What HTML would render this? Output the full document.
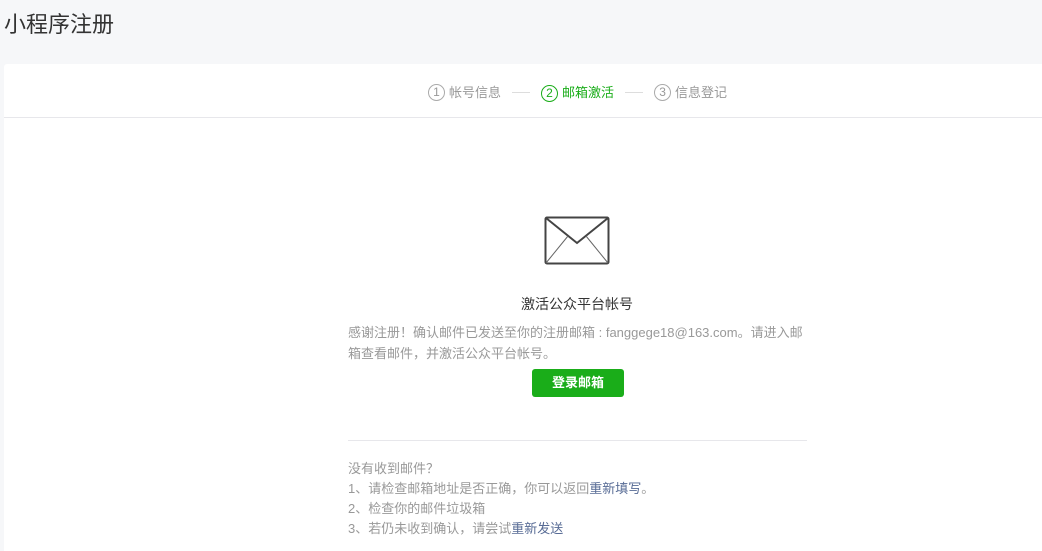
<!DOCTYPE html>
<html><head><meta charset="utf-8"><style>
*{margin:0;padding:0;box-sizing:border-box}
body{width:1042px;height:551px;overflow:hidden;background:#f6f7f9;font-family:"Liberation Sans","Noto Sans CJK SC",sans-serif;position:relative}
.t{position:absolute;left:4px;top:8px;font-size:22px;color:#333;line-height:34px}
.card{position:absolute;left:4px;top:64px;width:1038px;height:487px;background:#fff;border-radius:3px 0 0 0}
.hd{height:54px;border-bottom:1px solid #e7e7eb;position:relative}
.steps{position:absolute;top:18px;left:424px;font-size:13px;color:#999;line-height:20px;white-space:nowrap}
.steps span{display:inline-block;vertical-align:middle}
.c{display:inline-block;width:17px;height:17px;border:1px solid #aaa;border-radius:50%;text-align:center;font-size:12px;line-height:15px;margin-right:4px}
.ln{width:18px;height:1px;background:#ddd;margin:0 11px}
.g{color:#1aad19}.g .c{border-color:#1aad19}
.abs{position:absolute}
.p{left:344px;width:460px;font-size:13px;color:#999;line-height:21px}
</style></head><body>
<div class="t">小程序注册</div>
<div class="card">
<div class="hd"><div class="steps"><span class="c">1</span><span>帐号信息</span><span class="ln"></span><span class="g"><span class="c">2</span>邮箱激活</span><span class="ln"></span><span class="c">3</span><span>信息登记</span></div></div>
<svg class="abs" style="left:540px;top:152px" width="66" height="49" viewBox="0 0 66 49"><rect x="1.5" y="1.5" width="63" height="46" rx="1.5" fill="none" stroke="#444" stroke-width="2"/><path d="M2 2L33 27L64 2" fill="none" stroke="#444" stroke-width="2"/><path d="M2 47L24 20M64 47L42 20" fill="none" stroke="#666" stroke-width="1"/></svg>
<div class="abs" style="left:0;width:1146px;top:230px;text-align:center;font-size:14px;color:#333">激活公众平台帐号</div>
<div class="abs p" style="top:258px">感谢注册！确认邮件已发送至你的注册邮箱 : fanggege18@163.com。请进入邮箱查看邮件，并激活公众平台帐号。</div>
<div class="abs" style="left:528px;top:305px;width:92px;height:28px;background:#1aad19;border-radius:3px;color:#fff;font-size:13px;font-weight:bold;text-align:center;line-height:28px">登录邮箱</div>
<div class="abs" style="left:344px;top:376px;width:459px;height:1px;background:#e7e7eb"></div>
<div class="abs p" style="top:395px;line-height:20px">没有收到邮件？<br>1、请检查邮箱地址是否正确，你可以返回<span style="color:#576b95">重新填写</span>。<br>2、检查你的邮件垃圾箱<br>3、若仍未收到确认，请尝试<span style="color:#576b95">重新发送</span></div>
</div>
</body></html>
